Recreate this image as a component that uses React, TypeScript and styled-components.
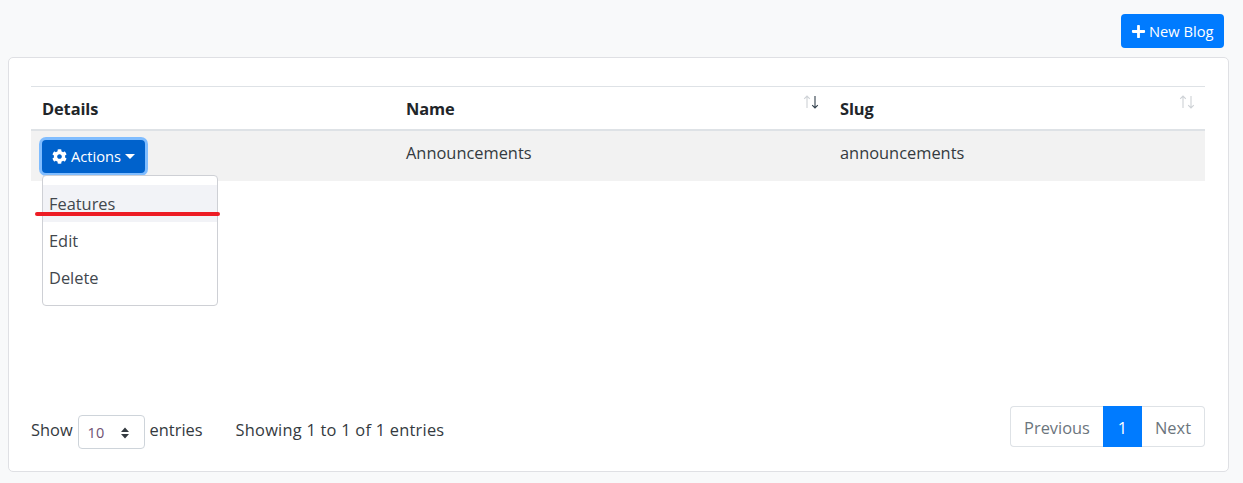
import React, {FC} from 'react';
import styled, {createGlobalStyle} from 'styled-components';
import {FaCog, FaPlus} from 'react-icons/fa';

const GlobalStyle = createGlobalStyle`
  html, body {
    margin: 0;
    padding: 0;
    background: #f8f9fa;
    color: #212529;
    font-family: "Open Sans", "Noto Sans", sans-serif;
    font-size: 16px;
  }
`;

const Page = styled.div`
  width: 1243px;
  height: 483px;
  overflow: hidden;
  box-sizing: border-box;
  padding: 14px 14px 0 8px;
`;

const TopBar = styled.div`
  display: flex;
  justify-content: flex-end;
  padding-right: 5px;
  margin-bottom: 9px;
`;

const PrimaryButton = styled.button`
  display: flex;
  align-items: center;
  gap: 3px;
  width: 103px;
  height: 34px;
  padding: 0 0 0 10px;
  border: none;
  border-radius: 4px;
  background: #007bff;
  color: #fff;
  font: 400 14.7px "Open Sans", sans-serif;
`;

const Card = styled.div`
  box-sizing: border-box;
  width: 1221px;
  height: 415px;
  padding: 28px 23px 0 22px;
  background: #fff;
  border: 1px solid #dfe0e4;
  border-radius: 5px;
`;

const Table = styled.table`
  width: 1174px;
  table-layout: fixed;
  border-collapse: collapse;
`;

const HeadCell = styled.th<{$width: number}>`
  position: relative;
  width: ${p => p.$width}px;
  height: 43px;
  box-sizing: border-box;
  padding: 2px 11px 0;
  border-top: 1px solid #dee2e6;
  border-bottom: 2px solid #dee2e6;
  text-align: left;
  font-size: 16.4px;
  font-weight: 700;
  letter-spacing: -0.1px;
`;

const SortArrows = styled.span`
  position: absolute;
  top: 7px;
  right: 10px;
  display: flex;
  gap: 0;
`;

const SortArrow = styled.svg<{$active?: boolean}>`
  width: 8px;
  height: 15px;
  fill: none;
  stroke: ${p => (p.$active ? '#33414d' : '#ced2d6')};
  stroke-width: 1.1;
`;

const BodyRow = styled.tr`
  background: #f2f2f2;
`;

const BodyCell = styled.td`
  position: relative;
  height: 51px;
  box-sizing: border-box;
  padding: 11px 11px 0;
  vertical-align: top;
  font-size: 16.4px;
  line-height: 22px;
  color: #343a40;
`;

const ActionCell = styled(BodyCell)`
  padding-top: 9px;
`;

const ActionButton = styled.button`
  display: flex;
  align-items: center;
  gap: 4px;
  width: 103px;
  height: 33px;
  padding: 0 0 0 10px;
  border: none;
  border-radius: 4px;
  background: #0062cc;
  box-shadow: 0 0 0 3px #80bdff;
  color: #fff;
  font: 400 14.7px "Open Sans", sans-serif;
`;

const Caret = styled.span`
  width: 0;
  height: 0;
  border-top: 5px solid #fff;
  border-left: 5px solid transparent;
  border-right: 5px solid transparent;
`;

const Menu = styled.div`
  position: absolute;
  z-index: 2;
  top: 44px;
  left: 11px;
  box-sizing: border-box;
  width: 176px;
  height: 131px;
  padding: 9px 0;
  background: #fff;
  border: 1px solid #ced0d5;
  border-radius: 4px;
`;

const MenuItem = styled.div<{$active?: boolean}>`
  height: 37px;
  padding-left: 6px;
  line-height: 37px;
  font-size: 16.4px;
  color: #42474d;
  background: ${p => (p.$active ? '#f2f3f7' : 'transparent')};
`;

const RedLine = styled.span`
  position: absolute;
  z-index: 3;
  left: 4px;
  top: 81px;
  width: 185px;
  height: 4px;
  border-radius: 2px;
  background: #ed1c24;
`;

const Footer = styled.div`
  display: flex;
  align-items: center;
  justify-content: space-between;
  width: 1174px;
  margin-top: 228px;
`;

const FooterLeft = styled.div`
  display: flex;
  align-items: center;
  font-size: 16.4px;
  color: #343a40;
  padding-top: 6px;
`;

const FooterText = styled.span<{$gap?: number; $spread?: number}>`
  margin-bottom: 4px;
  margin-left: ${p => p.$gap ?? 0}px;
  letter-spacing: ${p => p.$spread ?? 0}px;
`;

const Select = styled.div`
  position: relative;
  box-sizing: border-box;
  width: 67px;
  height: 34px;
  margin: 0 5px 0 5px;
  padding: 7px 0 0 9px;
  border: 1px solid #ced4da;
  border-radius: 4px;
  font-size: 14.5px;
  line-height: 20px;
  color: #6e5272;
`;

const SelectArrows = styled.svg`
  position: absolute;
  top: 11px;
  right: 14px;
  width: 10px;
  height: 12px;
  fill: #343a40;
`;

const Pagination = styled.div`
  display: flex;
  height: 41px;
  margin-top: -5px;
  font-size: 16.4px;
`;

const PageButton = styled.div<{$active?: boolean; $width: number; $side?: 'left' | 'right'}>`
  box-sizing: border-box;
  width: ${p => p.$width}px;
  text-align: center;
  background: ${p => (p.$active ? '#007bff' : '#fff')};
  color: ${p => (p.$active ? '#fff' : '#6c757d')};
  border: ${p => (p.$active ? 'none' : '1px solid #dee2e6')};
  line-height: ${p => (p.$active ? '44px' : '42px')};
  border-left-width: ${p => (p.$side === 'right' ? 0 : undefined)};
  border-right-width: ${p => (p.$side === 'left' ? 0 : undefined)};
  border-radius: ${p =>
    p.$side === 'left' ? '4px 0 0 4px' : p.$side === 'right' ? '0 4px 4px 0' : '0'};
`;

const Sort: FC<{active?: boolean}> = ({active}) => (
  <SortArrows>
    <SortArrow viewBox="0 0 8 15">
      <path d="M4 14V2M1.2 4.8 4 2l2.8 2.8" />
    </SortArrow>
    <SortArrow viewBox="0 0 8 15" $active={active}>
      <path d="M4 2v12M1.2 11.2 4 14l2.8-2.8" />
    </SortArrow>
  </SortArrows>
);

const App: FC = () => (
  <Page>
    <GlobalStyle />
    <TopBar>
      <PrimaryButton>
        <FaPlus size={15} />
        New Blog
      </PrimaryButton>
    </TopBar>
    <Card>
      <Table>
        <thead>
          <tr>
            <HeadCell $width={364}>Details</HeadCell>
            <HeadCell $width={434}>
              Name
              <Sort active />
            </HeadCell>
            <HeadCell $width={376}>
              Slug
              <Sort />
            </HeadCell>
          </tr>
        </thead>
        <tbody>
          <BodyRow>
            <ActionCell>
              <ActionButton>
                <FaCog size={15} />
                Actions
                <Caret />
              </ActionButton>
              <Menu>
                <MenuItem $active>Features</MenuItem>
                <MenuItem>Edit</MenuItem>
                <MenuItem>Delete</MenuItem>
              </Menu>
              <RedLine />
            </ActionCell>
            <BodyCell>Announcements</BodyCell>
            <BodyCell>announcements</BodyCell>
          </BodyRow>
        </tbody>
      </Table>
      <Footer>
        <FooterLeft>
          <FooterText>Show</FooterText>
          <Select>
            10
            <SelectArrows viewBox="0 0 10 12">
              <path d="M5 0.5 9 5H1zM5 11.5 1 7h8z" />
            </SelectArrows>
          </Select>
          <FooterText>entries</FooterText>
          <FooterText $gap={33} $spread={0.24}>Showing 1 to 1 of 1 entries</FooterText>
        </FooterLeft>
        <Pagination>
          <PageButton $width={93} $side="left">Previous</PageButton>
          <PageButton $width={39} $active>1</PageButton>
          <PageButton $width={63} $side="right">Next</PageButton>
        </Pagination>
      </Footer>
    </Card>
  </Page>
);

export default App;
